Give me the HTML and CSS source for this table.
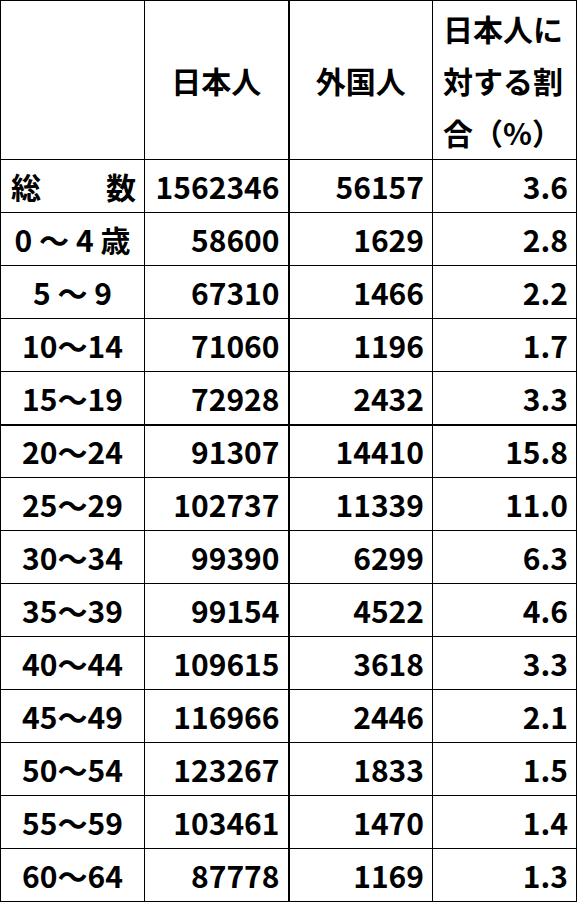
FILE: index.html
```html
<!DOCTYPE html>
<html lang="ja">
<head>
<meta charset="utf-8">
<link rel="stylesheet" href="styles.css">
</head>
<body>
<table class="tbl">
  <colgroup>
    <col class="c1"><col class="c2"><col class="c3"><col class="c4">
  </colgroup>
  <thead>
    <tr class="head">
      <th></th>
      <th class="hc">日本人</th>
      <th class="hc">外国人</th>
      <th class="hw">日本人に対する割合（%）</th>
    </tr>
  </thead>
  <tbody>
    <tr><td class="lab"><div class="just"><span>総</span><span>数</span></div></td><td class="num">1562346</td><td class="num">56157</td><td class="num">3.6</td></tr>
    <tr><td class="lab">0 ～ 4 歳</td><td class="num">58600</td><td class="num">1629</td><td class="num">2.8</td></tr>
    <tr><td class="lab">5 ～ 9</td><td class="num">67310</td><td class="num">1466</td><td class="num">2.2</td></tr>
    <tr><td class="lab">10～14</td><td class="num">71060</td><td class="num">1196</td><td class="num">1.7</td></tr>
    <tr class="thick"><td class="lab">15～19</td><td class="num">72928</td><td class="num">2432</td><td class="num">3.3</td></tr>
    <tr><td class="lab">20～24</td><td class="num">91307</td><td class="num">14410</td><td class="num">15.8</td></tr>
    <tr><td class="lab">25～29</td><td class="num">102737</td><td class="num">11339</td><td class="num">11.0</td></tr>
    <tr><td class="lab">30～34</td><td class="num">99390</td><td class="num">6299</td><td class="num">6.3</td></tr>
    <tr><td class="lab">35～39</td><td class="num">99154</td><td class="num">4522</td><td class="num">4.6</td></tr>
    <tr><td class="lab">40～44</td><td class="num">109615</td><td class="num">3618</td><td class="num">3.3</td></tr>
    <tr><td class="lab">45～49</td><td class="num">116966</td><td class="num">2446</td><td class="num">2.1</td></tr>
    <tr><td class="lab">50～54</td><td class="num">123267</td><td class="num">1833</td><td class="num">1.5</td></tr>
    <tr><td class="lab">55～59</td><td class="num">103461</td><td class="num">1470</td><td class="num">1.4</td></tr>
    <tr><td class="lab">60～64</td><td class="num">87778</td><td class="num">1169</td><td class="num">1.3</td></tr>
  </tbody>
</table>
</body>
</html>
```
FILE: styles.css
```css
html, body {
  margin: 0;
  padding: 0;
  background: #ffffff;
}
.tbl {
  border-collapse: collapse;
  table-layout: fixed;
  width: 576px;
  font-family: "Noto Sans CJK JP", "Noto Sans", sans-serif;
  font-weight: 700;
  font-size: 30px;
  color: #000;
}
.c1, .c2, .c3, .c4 { width: 144px; }
.tbl th, .tbl td {
  border: 1px solid #000;
  padding: 0 8px;
  white-space: nowrap;
}
.tbl td:nth-child(2), .tbl th:nth-child(2) {
  border-right: 2px solid #000;
}
.head { height: 159px; }
.head th { font-weight: 700; }
.hc { text-align: center; vertical-align: middle; padding-top: 6px; }
.hw {
  white-space: normal !important;
  text-align: left;
  line-height: 52px;
  padding: 0 10px !important;
  word-break: break-all;
  vertical-align: middle;
}
tbody tr { height: 53px; }
.tbl td { line-height: 30px; vertical-align: middle; }
.num { text-align: right; }
.lab { text-align: center; }
.just {
  display: flex;
  justify-content: space-between;
  align-items: center;
  padding-left: 2px;
}
.thick td { border-bottom: 2px solid #000; }
```
